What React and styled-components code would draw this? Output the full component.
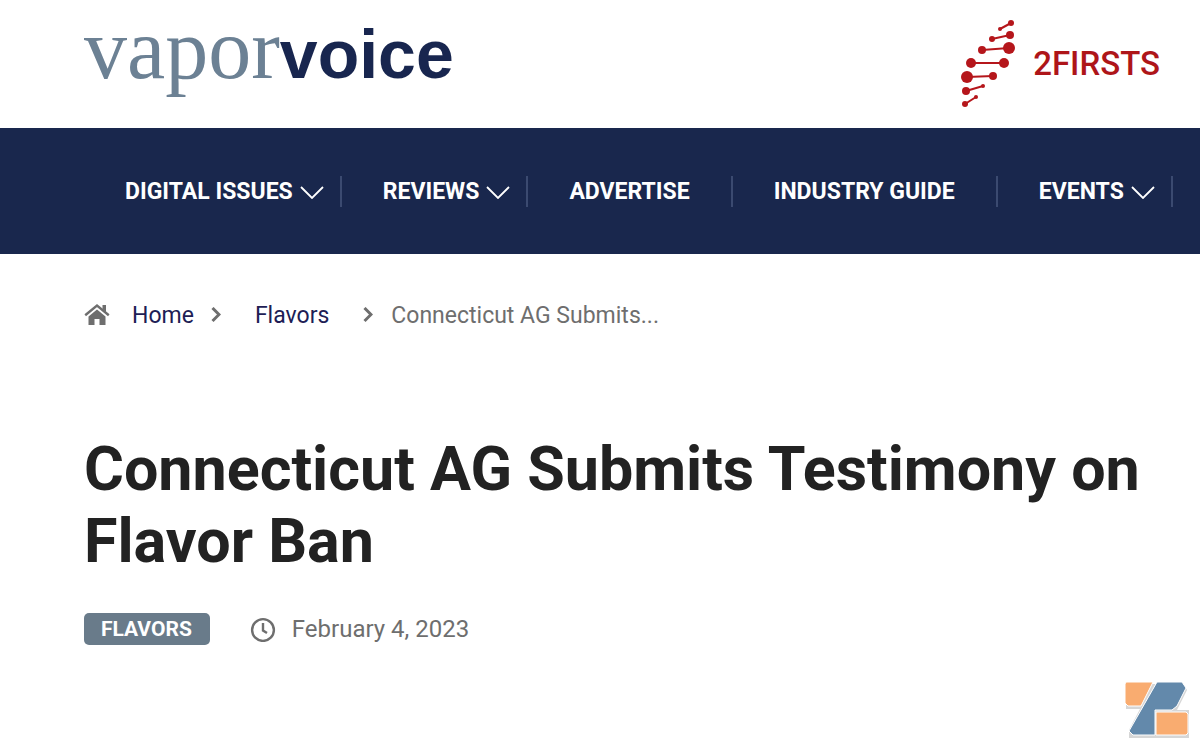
import React from 'react';
import styled, { createGlobalStyle } from 'styled-components';

const GlobalStyle = createGlobalStyle`
    * {
        box-sizing: border-box;
    }

    body {
        margin: 0;
        background: #fff;
        color: #6e6e6e;
        font-family: Roboto, 'Liberation Sans', sans-serif;
        overflow-x: hidden;
    }
`;

const Header = styled.header`
    display: flex;
    align-items: center;
    justify-content: space-between;
    height: 128px;
    padding: 0 40px 0 84px;
`;

const Brand = styled.a`
    display: flex;
    align-items: baseline;
    padding-bottom: 26px;
    color: #6c8194;
    font: 86px/100px 'Liberation Serif', serif;
    text-decoration: none;
`;

const BrandStrong = styled.span`
    color: #18264f;
    font: bold 68px/100px 'Liberation Sans', sans-serif;
`;

const Partner = styled.a`
    display: flex;
    align-items: center;
    gap: 18px;
    color: #ae1519;
    font-size: 33px;
    font-weight: 500;
    line-height: 48px;
    text-decoration: none;
`;

const Nav = styled.nav`
    padding: 48px 0 47px 84px;
    background: #19274d;
`;

const NavList = styled.ul`
    display: flex;
    margin: 0;
    padding: 0;
    list-style: none;
`;

const NavItem = styled.li`
    flex: none;
    padding: 0 ${props => props.$menu ? 16 : 41}px 0 41px;
    border-right: 2px solid #3b4a70;
`;

const NavLink = styled.a`
    display: flex;
    align-items: center;
    gap: 7px;
    color: #fff;
    font-size: 23px;
    font-weight: 700;
    line-height: 31px;
    text-decoration: none;
    white-space: nowrap;
`;

const Main = styled.main`
    padding: 46px 40px 48px 84px;
`;

const Crumbs = styled.nav`
    display: flex;
    align-items: center;
    font-size: 23px;
    line-height: 32px;
`;

const CrumbLink = styled.a`
    margin-left: ${props => props.$first ? 22 : 34}px;
    margin-right: ${props => props.$first ? 17 : 34}px;
    color: #201d55;
    text-decoration: none;
`;

const CrumbCurrent = styled.span`
    margin-left: 18px;
`;

const Title = styled.h1`
    margin: 101px 0 36px;
    color: #222;
    font-size: 61px;
    font-weight: 700;
    line-height: 72px;
`;

const Meta = styled.div`
    display: flex;
    align-items: center;
    gap: 40px;
`;

const Tag = styled.a`
    padding: 0 18px 0 17px;
    border-radius: 5px;
    background: #697b8a;
    color: #fff;
    font-size: 21px;
    font-weight: 700;
    line-height: 32px;
    text-decoration: none;
`;

const Posted = styled.div`
    display: flex;
    align-items: center;
    gap: 16px;
    font-size: 24px;
    line-height: 32px;
`;

const Watermark = styled.svg`
    position: fixed;
    right: 9px;
    bottom: 7px;
`;

const menu = [
    { label: 'DIGITAL ISSUES', sub: true },
    { label: 'REVIEWS', sub: true },
    { label: 'ADVERTISE' },
    { label: 'INDUSTRY GUIDE' },
    { label: 'EVENTS', sub: true },
];

// x1, y1, r1, x2, y2, r2
const helix = [
    [39, 9, 2, 50, 3, 3],
    [31, 19, 3, 49, 15, 4],
    [21, 30, 4, 48, 28, 6],
    [10, 43, 5, 43, 43, 5],
    [6, 57, 6, 32, 56, 4],
    [5, 71, 4, 22, 66, 2],
    [4, 84, 3, 15, 77, 2],
];

const Helix = () => (
    <svg width="54" height="88" viewBox="0 0 54 88" fill="#b5161b" aria-hidden="true">
        {helix.map(([x1, y1, r1, x2, y2, r2]) => (
            <g key={y1}>
                <line x1={x1} y1={y1} x2={x2} y2={y2} stroke="#b5161b" strokeWidth="2" />
                <circle cx={x1} cy={y1} r={r1} />
                <circle cx={x2} cy={y2} r={r2} />
            </g>
        ))}
    </svg>
);

const Caret = () => (
    <svg width="24" height="14" viewBox="0 0 24 14" fill="none" stroke="#fff" strokeWidth="1.8" aria-hidden="true">
        <path d="M1 2L12 13L23 2" />
    </svg>
);

const Chevron = () => (
    <svg width="10" height="18" viewBox="0 0 10 18" fill="none" stroke="#6e6e6e" strokeWidth="3" aria-hidden="true">
        <path d="M1.500 1L8 7.500L1.500 14" />
    </svg>
);

const HomeIcon = () => (
    <svg width="26" height="26" viewBox="0 0 26 26" fill="#6e6e6e" aria-hidden="true">
        <path d="M1.200 12.200L13 2.600L24.800 12.200" fill="none" stroke="#6e6e6e" strokeWidth="2.400" />
        <path d="M18.500 2H22V9L18.500 6.200Z" />
        <path d="M4.500 13.500L13 6.500L21.500 13.500V22H15.500V16H10.500V22H4.500Z" />
    </svg>
);

const Clock = () => (
    <svg width="26" height="26" viewBox="0 0 26 26" fill="none" stroke="#6e6e6e" strokeWidth="2.400" aria-hidden="true">
        <circle cx="13" cy="14" r="10.900" />
        <path d="M13 7V14.500L17 17" />
    </svg>
);

const App = () => {
    return (
        <>
            <GlobalStyle />
            <Header>
                <Brand href="#">vapor<BrandStrong>voice</BrandStrong></Brand>
                <Partner href="#"><Helix />2FIRSTS</Partner>
            </Header>
            <Nav aria-label="Main">
                <NavList>
                    {menu.map(item => (
                        <NavItem key={item.label} $menu={item.sub}>
                            <NavLink href="#">{item.label}{item.sub && <Caret />}</NavLink>
                        </NavItem>
                    ))}
                </NavList>
            </Nav>
            <Main>
                <Crumbs aria-label="Breadcrumb">
                    <HomeIcon />
                    <CrumbLink href="#" $first>Home</CrumbLink>
                    <Chevron />
                    <CrumbLink href="#">Flavors</CrumbLink>
                    <Chevron />
                    <CrumbCurrent>Connecticut AG Submits...</CrumbCurrent>
                </Crumbs>
                <Title>Connecticut AG Submits Testimony on Flavor Ban</Title>
                <Meta>
                    <Tag href="#">FLAVORS</Tag>
                    <Posted><Clock /><time dateTime="2023-02-04">February 4, 2023</time></Posted>
                </Meta>
            </Main>
            <Watermark width="68" height="62" viewBox="0 0 68 62" aria-hidden="true">
                <g fill="#bbb" opacity="0.6">
                    <path d="M3 4H60L64 10L54 30H66V58H6V50L17 29H3Z" />
                </g>
                <path d="M3 2H30L18 26H5L2 23V4Z" fill="#f9ac70" stroke="#fff" />
                <path d="M34 2H59L63 8L54 26L49 30H32V55H10L6 51Z" fill="#6389ab" stroke="#fff" />
                <path d="M33 32H63L65 34V53L63 55H33Z" fill="#f9ac70" stroke="#fff" />
            </Watermark>
        </>
    );
};

export default App;
